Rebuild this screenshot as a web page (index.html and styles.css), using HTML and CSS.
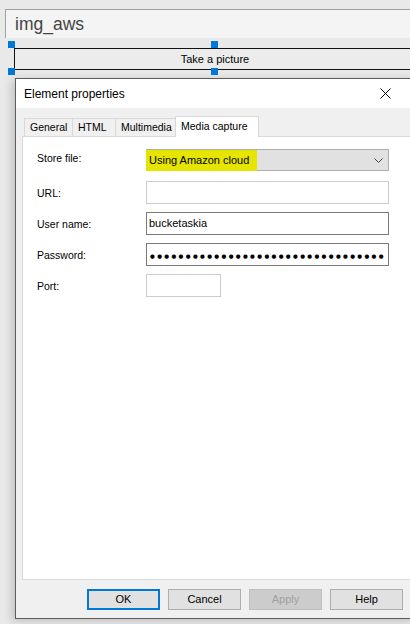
FILE: index.html
```html
<!DOCTYPE html>
<html lang="en">
<head>
    <meta charset="UTF-8">
    <meta name="viewport" content="width=device-width, initial-scale=1.0">
    <title>img_aws - Element properties</title>
    <link rel="stylesheet" href="styles.css">
</head>
<body>

<div class="name-field">img_aws</div>

<div class="design-area">
    <div class="picture-btn">Take a picture</div>
    <span class="handle h-tl"></span>
    <span class="handle h-tm"></span>
    <span class="handle h-bl"></span>
    <span class="handle h-bm"></span>
</div>

<div class="dialog">
    <div class="dialog-title">
        <span>Element properties</span>
        <svg class="close-icon" width="11" height="11" viewBox="0 0 11 11">
            <path d="M0.5 0.5 L10.5 10.5 M10.5 0.5 L0.5 10.5" stroke="#000" stroke-width="1" fill="none"/>
        </svg>
    </div>

    <div class="dialog-body">
        <div class="tabs">
            <div class="tab">General</div>
            <div class="tab">HTML</div>
            <div class="tab">Multimedia</div>
            <div class="tab active">Media capture</div>
        </div>

        <div class="tab-panel">
            <div class="form-row row-store">
                <label class="top">Store file:</label>
                <div class="select">
                    <span class="highlight">Using Amazon cloud</span>
                    <svg class="chevron" width="9" height="5" viewBox="0 0 9 5">
                        <path d="M0.5 0.5 L4.5 4.5 L8.5 0.5" stroke="#444" stroke-width="1" fill="none"/>
                    </svg>
                </div>
            </div>
            <div class="form-row">
                <label>URL:</label>
                <div class="input light"></div>
            </div>
            <div class="form-row">
                <label>User name:</label>
                <div class="input">bucketaskia</div>
            </div>
            <div class="form-row">
                <label>Password:</label>
                <div class="input"><span class="dots">●●●●●●●●●●●●●●●●●●●●●●●●●●●●●●●●●</span></div>
            </div>
            <div class="form-row">
                <label>Port:</label>
                <div class="input light port"></div>
            </div>
        </div>

        <div class="dialog-buttons">
            <div class="btn default">OK</div>
            <div class="btn">Cancel</div>
            <div class="btn disabled">Apply</div>
            <div class="btn">Help</div>
        </div>
    </div>
</div>

</body>
</html>
```

FILE: styles.css
```css
html, body {
    margin: 0;
    padding: 0;
    overflow: hidden;
}

body {
    font-family: 'Liberation Sans', Arial, sans-serif;
    font-size: 11px;
    color: #000;
    background: #e9e9e9;
    width: 410px;
    height: 624px;
}

.name-field {
    margin: 9px 0 0 5px;
    height: 28px;
    line-height: 28px;
    padding-left: 9px;
    border-top: 1px solid #a0a0a0;
    border-left: 1px solid #a0a0a0;
    background: #f4f4f4;
    font-size: 17.5px;
    color: #444;
}

.design-area {
    position: relative;
    margin: 10px 0 0 14px;
}

.picture-btn {
    height: 20px;
    line-height: 20px;
    width: 400px;
    margin-right: -20px;
    border: 1px solid #111;
    background: #ececec;
    text-align: center;
    font-size: 11px;
}

.handle {
    position: absolute;
    width: 7px;
    height: 7px;
    background: #0078d7;
}

.h-tl { left: -6px; top: -7px; }
.h-tm { left: 197px; top: -7px; }
.h-bl { left: -6px; top: 20px; }
.h-bm { left: 197px; top: 20px; }

.dialog {
    margin: 8px 0 0 15px;
    width: 400px;
    border: 1px solid #5c5c5c;
    background: #f0f0f0;
    box-shadow: -3px 2px 9px rgba(0, 0, 0, 0.18);
}

.dialog-title {
    height: 29px;
    background: #fff;
    display: flex;
    align-items: center;
    justify-content: space-between;
    padding-left: 8px;
    font-size: 12px;
}

.close-icon {
    margin-right: 25px;
}

.dialog-body {
    padding: 8px 0 8px 6px;
}

.tabs {
    display: flex;
    align-items: flex-end;
    margin-left: 2px;
    height: 20px;
}

.tab {
    height: 17px;
    line-height: 17px;
    padding: 0 5px;
    border: 1px solid #d9d9d9;
    border-bottom: none;
    margin-right: -1px;
    background: #f0f0f0;
    font-size: 10.5px;
}

.tab:nth-child(1) { width: 37px; }
.tab:nth-child(2) { width: 32px; }
.tab:nth-child(3) { width: 49px; }

.tab.active {
    height: 20px;
    line-height: 18px;
    width: 72px;
    background: #fff;
    position: relative;
    z-index: 1;
    margin-bottom: -1px;
}

.tab-panel {
    width: 377px;
    height: 430px;
    border: 1px solid #d9d9d9;
    background: #fff;
    padding: 12px 0 0 14px;
}

.form-row {
    display: flex;
    align-items: center;
    margin-bottom: 8px;
}

.row-store {
    margin-bottom: 10px;
}

.form-row label {
    width: 109px;
    font-size: 10.5px;
}

.form-row label.top {
    align-self: flex-start;
    padding-top: 3px;
}

.select {
    width: 241px;
    height: 20px;
    border: 1px solid #adadad;
    background: #e1e1e1;
    display: flex;
    align-items: center;
    justify-content: space-between;
}

.highlight {
    box-sizing: border-box;
    width: 111px;
    height: 21px;
    line-height: 21px;
    padding-left: 3px;
    margin-left: -1px;
    background: #e5e500;
    font-size: 11px;
    white-space: nowrap;
}

.chevron {
    margin-right: 5px;
}

.input {
    width: 237px;
    height: 21px;
    line-height: 21px;
    padding: 0 2px;
    border: 1px solid #7a7a7a;
    background: #fff;
    font-size: 11px;
    white-space: nowrap;
}

.input.light {
    border-color: #cccccc;
}

.input.port {
    width: 69px;
}

.dots {
    font-family: 'DejaVu Sans', sans-serif;
    font-size: 5.5px;
    letter-spacing: 2.35px;
    margin-left: 1px;
}

.dialog-buttons {
    display: flex;
    gap: 8px;
    margin-top: 9px;
    padding-left: 65px;
}

.btn {
    width: 71px;
    height: 19px;
    line-height: 19px;
    border: 1px solid #adadad;
    background: #e1e1e1;
    text-align: center;
    font-size: 11px;
}

.btn.default {
    width: 69px;
    height: 17px;
    line-height: 17px;
    border: 2px solid #0078d7;
}

.btn.disabled {
    background: #cccccc;
    border-color: #bfbfbf;
    color: #a0a0a0;
}
```
